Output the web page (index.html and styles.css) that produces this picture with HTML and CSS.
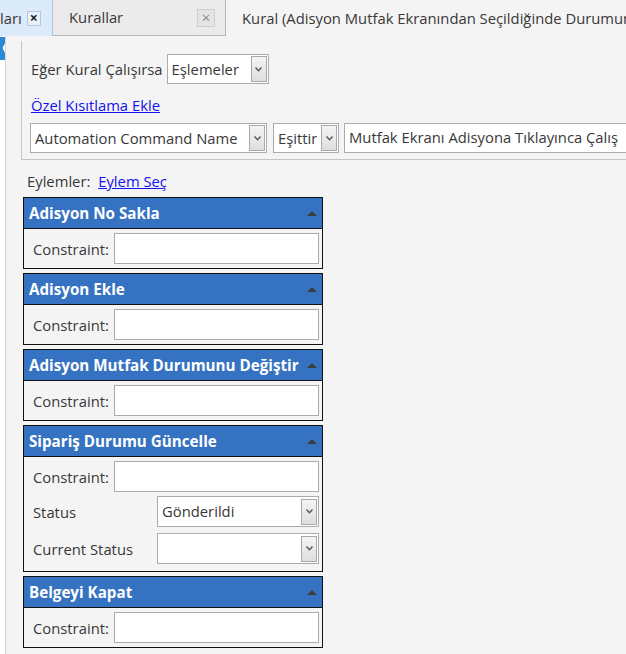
FILE: index.html
```html
<!DOCTYPE html>
<html>
<head>
    <title>Kural</title>
    <link rel="stylesheet" href="styles.css">
</head>
<body>
    <div class="tabs">
        <div class="tab tab-prev">
            <span class="tab-title">ları</span>
            <span class="tab-close">&#215;</span>
        </div>
        <div class="tab tab-rules">
            <span class="tab-title">Kurallar</span>
            <span class="tab-close dim">&#215;</span>
        </div>
        <div class="tab tab-active">
            <span class="tab-title">Kural (Adisyon Mutfak Ekranından Seçildiğinde Durumunu Değiştir)</span>
        </div>
    </div>

    <div class="main">
        <div class="side">
            <svg width="6" height="26" viewBox="0 0 6 26">
                <polygon points="0,1 6,1 6,5 2.5,12 6,19 6,24 0,24" fill="#2b8ad8"/>
            </svg>
        </div>

        <div class="content">
            <div class="rule-box">
                <div class="row">
                    <span class="label">Eğer Kural Çalışırsa</span>
                    <div class="combo combo-match">
                        <span class="combo-text">Eşlemeler</span>
                        <span class="combo-btn"><svg width="7" height="5" viewBox="0 0 7 5"><path d="M0.5 0.5 L3.5 3.8 L6.5 0.5" fill="none" stroke="#555" stroke-width="1.4"/></svg></span>
                    </div>
                </div>
                <a href="#" class="link add-link">Özel Kısıtlama Ekle</a>
                <div class="row constraint-row">
                    <div class="combo combo-name">
                        <span class="combo-text">Automation Command Name</span>
                        <span class="combo-btn"><svg width="7" height="5" viewBox="0 0 7 5"><path d="M0.5 0.5 L3.5 3.8 L6.5 0.5" fill="none" stroke="#555" stroke-width="1.4"/></svg></span>
                    </div>
                    <div class="combo combo-op">
                        <span class="combo-text">Eşittir</span>
                        <span class="combo-btn"><svg width="7" height="5" viewBox="0 0 7 5"><path d="M0.5 0.5 L3.5 3.8 L6.5 0.5" fill="none" stroke="#555" stroke-width="1.4"/></svg></span>
                    </div>
                    <div class="text-input value-input">Mutfak Ekranı Adisyona Tıklayınca Çalış</div>
                </div>
            </div>

            <div class="actions-head">
                <span>Eylemler:</span>
                <a href="#" class="link">Eylem Seç</a>
            </div>

            <div class="panel">
                <div class="panel-head"><span>Adisyon No Sakla</span><span class="collapse"></span></div>
                <div class="panel-body">
                    <div class="field"><span class="field-label">Constraint:</span><div class="text-input"></div></div>
                </div>
            </div>

            <div class="panel">
                <div class="panel-head"><span>Adisyon Ekle</span><span class="collapse"></span></div>
                <div class="panel-body">
                    <div class="field"><span class="field-label">Constraint:</span><div class="text-input"></div></div>
                </div>
            </div>

            <div class="panel">
                <div class="panel-head"><span>Adisyon Mutfak Durumunu Değiştir</span><span class="collapse"></span></div>
                <div class="panel-body">
                    <div class="field"><span class="field-label">Constraint:</span><div class="text-input"></div></div>
                </div>
            </div>

            <div class="panel">
                <div class="panel-head"><span>Sipariş Durumu Güncelle</span><span class="collapse"></span></div>
                <div class="panel-body tall">
                    <div class="field"><span class="field-label">Constraint:</span><div class="text-input"></div></div>
                    <div class="field wide status-row">
                        <span class="field-label">Status</span>
                        <div class="combo">
                            <span class="combo-text">Gönderildi</span>
                            <span class="combo-btn"><svg width="7" height="5" viewBox="0 0 7 5"><path d="M0.5 0.5 L3.5 3.8 L6.5 0.5" fill="none" stroke="#555" stroke-width="1.4"/></svg></span>
                        </div>
                    </div>
                    <div class="field wide current-row">
                        <span class="field-label">Current Status</span>
                        <div class="combo">
                            <span class="combo-text"></span>
                            <span class="combo-btn"><svg width="7" height="5" viewBox="0 0 7 5"><path d="M0.5 0.5 L3.5 3.8 L6.5 0.5" fill="none" stroke="#555" stroke-width="1.4"/></svg></span>
                        </div>
                    </div>
                </div>
            </div>

            <div class="panel">
                <div class="panel-head"><span>Belgeyi Kapat</span><span class="collapse"></span></div>
                <div class="panel-body">
                    <div class="field"><span class="field-label">Constraint:</span><div class="text-input"></div></div>
                </div>
            </div>
        </div>
    </div>
</body>
</html>
```

FILE: styles.css
```css
html, body { margin: 0; padding: 0; }
body {
    width: 626px;
    height: 654px;
    overflow: hidden;
    background: #f4f4f4;
    font-family: "Open Sans", "Noto Sans", sans-serif;
    font-size: 14.8px;
    color: #383838;
}

/* tab strip */
.tabs {
    display: flex;
    height: 36px;
    white-space: nowrap;
}
.tab {
    display: flex;
    align-items: center;
    box-sizing: border-box;
    height: 36px;
    line-height: 20px;
}
.tab-title { padding-bottom: 1px; }
.tab-prev {
    width: 53px;
    padding-left: 0;
    background: #dcebf9;
    border-right: 1px solid #b4c4d4;
}
.tab-prev .tab-close {
    margin-left: 5px;
    width: 12px;
    height: 13px;
    border: 1px solid #b8c8d8;
    background: #e8f1fa;
    color: #222;
    font-weight: bold;
    font-size: 14px;
    line-height: 12px;
    text-align: center;
}
.tab-rules {
    width: 173px;
    padding-left: 16px;
    background: #ebebeb;
    border-right: 1px solid #b8b8b8;
    border-bottom: 1px solid #b8b8b8;
}
.tab-rules .tab-close {
    margin-left: auto;
    margin-right: 10px;
    width: 16px;
    height: 16px;
    border: 1px solid #cfcfcf;
    background: #e4e4e4;
    color: #8a8a8a;
    font-size: 15px;
    line-height: 15px;
    text-align: center;
}
.tab-active {
    flex: 1;
    min-width: 0;
    padding-left: 16px;
    overflow: hidden;
}

/* main area */
.main {
    display: flex;
    height: 618px;
}
.side {
    width: 5px;
    flex-shrink: 0;
    background: #fff;
    border-right: 1px solid #d4d4d4;
    overflow: hidden;
}
.side svg { display: block; }
.content {
    flex: 1;
    min-width: 0;
    padding: 5px 0 0 15px;
}

.rule-box {
    border-left: 1px solid #c4c4c4;
    border-bottom: 1px solid #c4c4c4;
    padding: 13px 0 6px 8px;
    white-space: nowrap;
    overflow: hidden;
}
.row {
    display: flex;
    align-items: center;
}
.label { margin-left: 1px; margin-right: 4px; }
.link { color: #1212ee; text-decoration: underline; }
.add-link {
    display: inline-block;
    margin: 10px 0 0 1px;
    line-height: 22px;
}
.constraint-row { margin-top: 7px; gap: 6px; }
.constraint-row .value-input { margin-left: -1px; }

/* combo box */
.combo {
    display: flex;
    align-items: center;
    flex-shrink: 0;
    box-sizing: border-box;
    height: 30px;
    border: 1px solid #acacac;
    background: #fff;
    padding: 0 1px 0 4px;
}
.combo-text { flex: 1; line-height: 20px; overflow: hidden; padding-bottom: 1px; }
.combo-btn {
    display: flex;
    align-items: center;
    justify-content: center;
    flex-shrink: 0;
    box-sizing: border-box;
    width: 16px;
    height: 26px;
    margin-left: 4px;
    border: 1px solid #a9a9a9;
    background: linear-gradient(#f4f4f4, #dedede);
}
.combo-match { width: 102px; }
.combo-name { width: 237px; }
.combo-op { width: 66px; }

.text-input {
    box-sizing: border-box;
    height: 31px;
    border: 1px solid #acacac;
    background: #fff;
    flex: 1;
}
.value-input {
    flex: none;
    width: 320px;
    height: 30px;
    padding-left: 4px;
    line-height: 27px;
    overflow: hidden;
}

.actions-head {
    margin: 11px 0 6px 6px;
    line-height: 20px;
}
.actions-head .link { margin-left: 4px; }

/* action panels */
.panel {
    box-sizing: border-box;
    width: 300px;
    margin: 0 0 4px 2px;
    border: 1px solid #111;
}
.panel-head {
    display: flex;
    align-items: center;
    height: 30px;
    padding: 0 5px;
    background: #3572c1;
    border-bottom: 1px solid #111;
    color: #fff;
    font-weight: bold;
    font-size: 15.2px;
    line-height: 20px;
}
.panel-head span:first-child { flex: 1; padding-bottom: 1px; white-space: nowrap; }
.collapse {
    width: 0;
    height: 0;
    border-left: 5px solid transparent;
    border-right: 5px solid transparent;
    border-bottom: 5px solid #3d3d3d;
}
.panel-body { padding: 4px 3px 4px 9px; }
.panel-body.tall { padding-bottom: 7px; }
.field {
    display: flex;
    align-items: center;
}
.field-label { width: 81px; flex-shrink: 0; line-height: 20px; }
.wide .field-label { width: 124px; }
.wide .combo { flex: 1; height: 31px; }
.status-row { margin-top: 4px; }
.current-row { margin-top: 6px; }
```
